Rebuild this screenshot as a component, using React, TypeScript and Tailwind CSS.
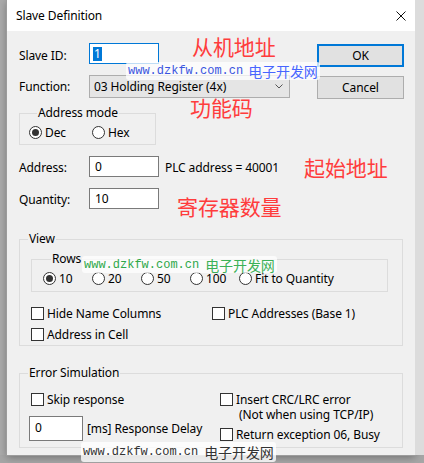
import React from "react";

const ui = { fontFamily: '"Noto Sans", "Liberation Sans", sans-serif' };
const cjk = { fontFamily: '"Noto Sans CJK SC", "Noto Sans", sans-serif' };
const mono = { fontFamily: '"Liberation Mono", "DejaVu Sans Mono", monospace' };

function Radio({ checked, label, width }: { checked?: boolean; label: string; width: string }) {
  return (
    <div className={`flex h-[13px] items-center ${width}`}>
      <span className="flex h-[13px] w-[13px] shrink-0 items-center justify-center rounded-full border border-[#333] bg-white">
        {checked && <span className="h-[7px] w-[7px] rounded-full bg-[#333]" />}
      </span>
      <span className="ml-[3px] leading-[16px]">{label}</span>
    </div>
  );
}

function Check({ label }: { label: string }) {
  return (
    <div className="flex h-[13px] items-center">
      <span className="h-[13px] w-[13px] shrink-0 border border-[#333] bg-white" />
      <span className="ml-[3px] whitespace-nowrap leading-[16px]">{label}</span>
    </div>
  );
}

function Group({ title, className, children }: { title: string; className: string; children: React.ReactNode }) {
  return (
    <fieldset className={`border border-[#dcdcdc] ${className}`}>
      <legend className="ml-[8px] px-[1px] leading-[16px]">{title}</legend>
      {children}
    </fieldset>
  );
}

export default function App() {
  return (
    <div className="relative flex h-[463px] w-[424px] flex-col overflow-hidden bg-[#a6a6a6] text-[12px] tracking-[-0.1px] text-black" style={ui}>
      <div className="flex h-[455px]">
        <div className="w-[7px] bg-[#ababab]" />
        <div className="flex w-[408px] flex-col shadow-[0_0_0_1px_#9c9c9c,0_2px_8px_rgba(0,0,0,0.35)]">
          {/* title bar */}
          <div className="flex h-[31px] items-center justify-between bg-white pl-[9px] pr-[9px]">
            <span className="leading-[16px]">Slave Definition</span>
            <svg width="10" height="10" viewBox="0 0 10 10">
              <path d="M0.5 0.5 L9.5 9.5 M9.5 0.5 L0.5 9.5" stroke="#111" strokeWidth="1" />
            </svg>
          </div>

          {/* body */}
          <div className="flex flex-1 flex-col bg-[#f0f0f0]">
            <div className="flex items-start">
              <div className="flex-1 pl-[12px]">
                <div className="mt-[12px] flex h-[21px]">
                  <span className="mt-[5px] w-[70px] leading-[16px]">Slave ID:</span>
                  <div className="flex h-[21px] w-[70px] items-center border border-[#0078d7] bg-white pl-[3px]">
                    <span className="bg-[#0078d7] px-[1px] leading-[14px] text-white">1</span>
                  </div>
                </div>
                <div className="mt-[11px] flex h-[23px] items-center">
                  <span className="w-[70px] leading-[16px]">Function:</span>
                  <div className="flex h-[23px] w-[201px] items-center justify-between border border-[#adadad] bg-[#e5e5e5] pl-[4px] pr-[6px]">
                    <span className="leading-[16px]">03 Holding Register (4x)</span>
                    <svg width="8" height="5" viewBox="0 0 8 5">
                      <path d="M0.5 0.5 L4 4 L7.5 0.5" fill="none" stroke="#555" strokeWidth="1" />
                    </svg>
                  </div>
                </div>
                <Group title="Address mode" className="mt-[7px] w-[137px] pb-[5px] pl-[9px] pt-[5px]">
                  <div className="flex">
                    <Radio checked label="Dec" width="w-[63px]" />
                    <Radio label="Hex" width="w-[60px]" />
                  </div>
                </Group>
                <div className="mt-[11px] flex h-[21px]">
                  <span className="mt-[4px] w-[70px] leading-[16px]">Address:</span>
                  <div className="h-[21px] w-[70px] border border-[#7a7a7a] bg-white pl-[5px] leading-[19px]">0</div>
                  <span className="ml-[6px] mt-[4px] leading-[16px]">PLC address = 40001</span>
                </div>
                <div className="mt-[11px] flex h-[21px]">
                  <span className="mt-[4px] w-[70px] leading-[16px]">Quantity:</span>
                  <div className="h-[21px] w-[70px] border border-[#7a7a7a] bg-white pl-[5px] leading-[19px]">10</div>
                </div>
              </div>
              <div className="mr-[11px] mt-[13px] flex w-[87px] flex-col">
                <button className="flex h-[23px] items-center justify-center border-2 border-[#0078d7] bg-[#e1e1e1] leading-[16px]">OK</button>
                <button className="mt-[9px] flex h-[23px] items-center justify-center border border-[#adadad] bg-[#e1e1e1] leading-[16px]">Cancel</button>
              </div>
            </div>

            <Group title="View" className="mx-[12px] mt-[22px] pb-[4px]">
              <Group title="Rows" className="ml-[11px] mr-[14px] mt-[4px] pb-[6px] pl-[11px] pt-[5px]">
                <div className="flex">
                  <Radio checked label="10" width="w-[49px]" />
                  <Radio label="20" width="w-[49px]" />
                  <Radio label="50" width="w-[49px]" />
                  <Radio label="100" width="w-[49px]" />
                  <Radio label="Fit to Quantity" width="w-[120px]" />
                </div>
              </Group>
              <div className="mt-[15px] grid grid-cols-[181px_1fr] gap-y-[8px] pl-[11px]">
                <Check label="Hide Name Columns" />
                <Check label="PLC Addresses (Base 1)" />
                <Check label="Address in Cell" />
              </div>
            </Group>

            <Group title="Error Simulation" className="mx-[12px] mt-[19px] pb-[6px]">
              <div className="flex">
                <div className="w-[200px]">
                  <div className="ml-[11px] mt-[12px]">
                    <Check label="Skip response" />
                  </div>
                  <div className="ml-[9px] mt-[10px] flex items-center">
                    <div className="h-[25px] w-[54px] border border-[#7a7a7a] bg-white pl-[5px] leading-[21px]">0</div>
                    <span className="ml-[4px] leading-[16px]">[ms] Response Delay</span>
                  </div>
                </div>
                <div className="mt-[12px]">
                  <Check label="Insert CRC/LRC error" />
                  <div className="ml-[19px] mt-[1px] leading-[16px]">(Not when using TCP/IP)</div>
                  <div className="mt-[5px]">
                    <Check label="Return exception 06, Busy" />
                  </div>
                </div>
              </div>
            </Group>
          </div>
        </div>
        <div className="flex-1 bg-[#dcdcdc]" />
      </div>

      {/* red annotations */}
      <span className="absolute left-[192px] top-[34px] text-[21px] leading-[24px] text-[#ff3c3c]" style={cjk}>从机地址</span>
      <span className="absolute left-[190px] top-[95px] text-[21px] leading-[24px] text-[#ff3c3c]" style={cjk}>功能码</span>
      <span className="absolute left-[304px] top-[155px] text-[21px] leading-[24px] text-[#ff3c3c]" style={cjk}>起始地址</span>
      <span className="absolute left-[177px] top-[194px] text-[21px] leading-[24px] text-[#ff3c3c]" style={cjk}>寄存器数量</span>

      {/* watermarks */}
      <div className="absolute left-[126px] top-[62px] flex h-[18px] items-center rounded-[3px] bg-white/75 px-[2px]">
        <span className="text-[12px] leading-[14px] tracking-normal text-[#3a55e0]" style={mono}>www.dzkfw.com.cn</span>
        <span className="ml-[5px] text-[14px] leading-[16px] text-[#4766ff]" style={cjk}>电子开发网</span>
      </div>
      <div className="absolute left-[82px] top-[256px] flex h-[17px] items-center rounded-[3px] bg-white/75 px-[2px]">
        <span className="text-[12px] leading-[14px] tracking-normal text-[#2ea84a]" style={mono}>www.dzkfw.com.cn</span>
        <span className="ml-[6px] text-[14px] leading-[16px] text-[#3bb158]" style={cjk}>电子开发网</span>
      </div>
      <div className="absolute left-[81px] top-[442px] flex h-[20px] items-center rounded-[3px] bg-white/80 px-[2px]">
        <span className="text-[12px] leading-[14px] tracking-normal text-[#333]" style={mono}>www.dzkfw.com.cn</span>
        <span className="ml-[6px] text-[14px] leading-[16px] text-[#333]" style={cjk}>电子开发网</span>
      </div>
    </div>
  );
}
